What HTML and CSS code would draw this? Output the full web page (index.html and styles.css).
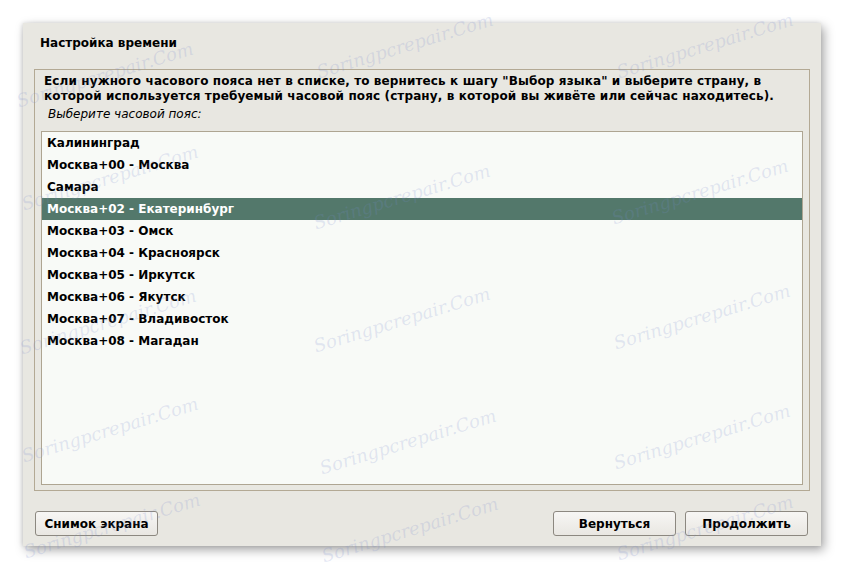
FILE: index.html
```html
<!DOCTYPE html>
<html lang="ru">
<head>
<meta charset="utf-8">
<title>Настройка времени</title>
<link rel="stylesheet" href="styles.css">
</head>
<body>
<div class="window">
  <div class="title">Настройка времени</div>
  <div class="frame">
    <p class="desc">Если нужного часового пояса нет в списке, то вернитесь к шагу "Выбор языка" и выберите страну, в которой используется требуемый часовой пояс (страну, в которой вы живёте или сейчас находитесь).</p>
    <div class="prompt">Выберите часовой пояс:</div>
    <ul class="list">
      <li class="row">Калининград</li>
      <li class="row">Москва+00 - Москва</li>
      <li class="row">Самара</li>
      <li class="row selected">Москва+02 - Екатеринбург</li>
      <li class="row">Москва+03 - Омск</li>
      <li class="row">Москва+04 - Красноярск</li>
      <li class="row">Москва+05 - Иркутск</li>
      <li class="row">Москва+06 - Якутск</li>
      <li class="row">Москва+07 - Владивосток</li>
      <li class="row">Москва+08 - Магадан</li>
    </ul>
  </div>
  <div class="buttons">
    <button class="btn">Снимок экрана</button>
    <div class="spacer"></div>
    <button class="btn">Вернуться</button>
    <button class="btn">Продолжить</button>
  </div>
</div>
<div class="watermarks" aria-hidden="true">
  <span class="wm wm-a1">Soringpcrepair.Com</span>
  <span class="wm wm-b1">Soringpcrepair.Com</span>
  <span class="wm wm-c1">Soringpcrepair.Com</span>
  <span class="wm wm-a2">Soringpcrepair.Com</span>
  <span class="wm wm-b2">Soringpcrepair.Com</span>
  <span class="wm wm-c2">Soringpcrepair.Com</span>
  <span class="wm wm-a3">Soringpcrepair.Com</span>
  <span class="wm wm-b3">Soringpcrepair.Com</span>
  <span class="wm wm-c3">Soringpcrepair.Com</span>
  <span class="wm wm-a4">Soringpcrepair.Com</span>
  <span class="wm wm-b4">Soringpcrepair.Com</span>
  <span class="wm wm-c4">Soringpcrepair.Com</span>
  <span class="wm wm-a5">Soringpcrepair.Com</span>
  <span class="wm wm-b5">Soringpcrepair.Com</span>
  <span class="wm wm-c5">Soringpcrepair.Com</span>
</div>
</body>
</html>
```

FILE: styles.css
```css
html, body {
  margin: 0;
  padding: 0;
  background: #ffffff;
}
body {
  position: relative;
  width: 845px;
  height: 569px;
  overflow: hidden;
  font-family: "DejaVu Sans", sans-serif;
  font-weight: bold;
  font-size: 12px;
  color: #000;
}
.window {
  margin: 23px 0 0 23px;
  width: 798px;
  height: 523px;
  box-sizing: border-box;
  background: #e8e7e1;
  box-shadow: 3px 4px 10px rgba(0,0,0,0.35), -1px 0 4px rgba(0,0,0,0.12);
  padding: 10px 13px 10px 11px;
  display: flex;
  flex-direction: column;
}
.title {
  line-height: 20px;
  padding-left: 6px;
  margin-bottom: 16px;
}
.frame {
  border: 1px solid #b3a994;
  height: 422px;
  margin-right: -2px;
  box-sizing: border-box;
  padding: 4px 6px 5px 6px;
  display: flex;
  flex-direction: column;
}
.desc {
  margin: 0;
  padding-left: 3px;
  line-height: 15px;
  letter-spacing: 0.12px;
}
.prompt {
  font-weight: normal;
  font-style: italic;
  line-height: 15px;
  padding-left: 7px;
  margin-top: 3px;
  margin-bottom: 9px;
}
.list {
  list-style: none;
  margin: 0;
  padding: 0;
  flex: 1;
  background: #f8faf7;
  border: 1px solid #aea592;
}
.row {
  height: 22px;
  line-height: 22px;
  padding-left: 5px;
}
.row.selected {
  background: #53786b;
  color: #ffffff;
}
.buttons {
  display: flex;
  margin-top: 20px;
  gap: 9px;
}
.spacer {
  flex: 1;
}
.btn {
  width: 123px;
  height: 25px;
  font-family: "DejaVu Sans", sans-serif;
  font-weight: bold;
  font-size: 12px;
  color: #000;
  border: 1px solid #8c8880;
  border-radius: 3px;
  background: linear-gradient(#f7f6f4, #e9e7e2);
  padding: 0;
  margin: 0;
}
.btn:first-child {
  margin-left: 1px;
}
.watermarks {
  position: absolute;
  inset: 0;
  pointer-events: none;
}
.wm {
  position: absolute;
  transform: translate(-50%, -50%) rotate(-17deg);
  font-family: "DejaVu Serif", serif;
  font-style: italic;
  font-weight: normal;
  font-size: 18px;
  line-height: 20px;
  white-space: nowrap;
  color: rgba(120, 140, 205, 0.2);
}
.wm-a1 { left: 105px; top: 75px; }
.wm-b1 { left: 405px; top: 46px; }
.wm-c1 { left: 705px; top: 46px; }
.wm-a2 { left: 110px; top: 178px; }
.wm-b2 { left: 402px; top: 197px; }
.wm-c2 { left: 700px; top: 192px; }
.wm-a3 { left: 108px; top: 322px; }
.wm-b3 { left: 402px; top: 320px; }
.wm-c3 { left: 702px; top: 317px; }
.wm-a4 { left: 110px; top: 430px; }
.wm-b4 { left: 408px; top: 442px; }
.wm-c4 { left: 702px; top: 437px; }
.wm-a5 { left: 112px; top: 526px; }
.wm-b5 { left: 410px; top: 530px; }
.wm-c5 { left: 705px; top: 528px; }
```
